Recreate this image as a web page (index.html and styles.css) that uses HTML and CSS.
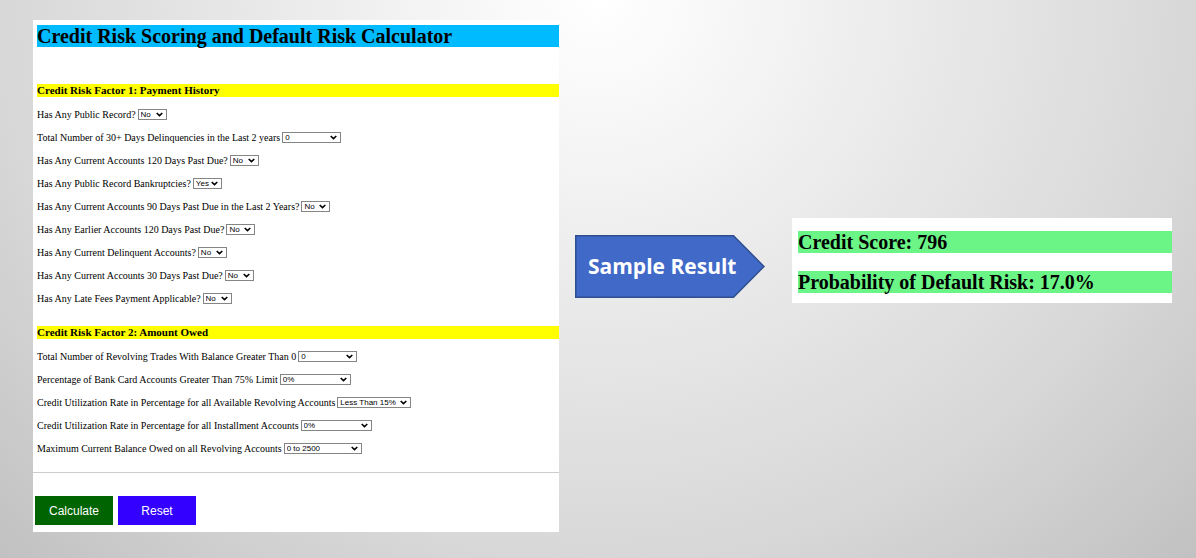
FILE: index.html
```html
<!DOCTYPE html>
<html lang="en">
<head>
<meta charset="utf-8">
<title>Credit Risk Scoring and Default Risk Calculator</title>
<link rel="stylesheet" href="styles.css">
</head>
<body>
<main class="slide">
  <form class="calculator">
    <h1 class="title">Credit Risk Scoring and Default Risk Calculator</h1>
    <section class="factor">
      <h2 class="factor-title">Credit Risk Factor 1: Payment History</h2>
      <div class="row"><label for="public-record">Has Any Public Record?</label><select id="public-record" class="pick"><option>No</option><option>Yes</option></select></div>
      <div class="row"><label for="delinq-30">Total Number of 30+ Days Delinquencies in the Last 2 years</label><select id="delinq-30" class="pick pick-count"><option>0</option><option>1</option></select></div>
      <div class="row"><label for="current-120">Has Any Current Accounts 120 Days Past Due?</label><select id="current-120" class="pick"><option>No</option><option>Yes</option></select></div>
      <div class="row"><label for="bankrupt">Has Any Public Record Bankruptcies?</label><select id="bankrupt" class="pick"><option>Yes</option><option>No</option></select></div>
      <div class="row"><label for="current-90">Has Any Current Accounts 90 Days Past Due in the Last 2 Years?</label><select id="current-90" class="pick"><option>No</option><option>Yes</option></select></div>
      <div class="row"><label for="earlier-120">Has Any Earlier Accounts 120 Days Past Due?</label><select id="earlier-120" class="pick"><option>No</option><option>Yes</option></select></div>
      <div class="row"><label for="delinquent">Has Any Current Delinquent Accounts?</label><select id="delinquent" class="pick"><option>No</option><option>Yes</option></select></div>
      <div class="row"><label for="current-30">Has Any Current Accounts 30 Days Past Due?</label><select id="current-30" class="pick"><option>No</option><option>Yes</option></select></div>
      <div class="row"><label for="late-fees">Has Any Late Fees Payment Applicable?</label><select id="late-fees" class="pick"><option>No</option><option>Yes</option></select></div>
    </section>
    <section class="factor">
      <h2 class="factor-title">Credit Risk Factor 2: Amount Owed</h2>
      <div class="row"><label for="trades">Total Number of Revolving Trades With Balance Greater Than 0</label><select id="trades" class="pick pick-count"><option>0</option><option>1</option></select></div>
      <div class="row"><label for="bank-card">Percentage of Bank Card Accounts Greater Than 75% Limit</label><select id="bank-card" class="pick pick-percent"><option>0%</option></select></div>
      <div class="row"><label for="revolving">Credit Utilization Rate in Percentage for all Available Revolving Accounts</label><select id="revolving" class="pick pick-range"><option>Less Than 15%</option></select></div>
      <div class="row"><label for="installment">Credit Utilization Rate in Percentage for all Installment Accounts</label><select id="installment" class="pick pick-percent"><option>0%</option></select></div>
      <div class="row"><label for="max-balance">Maximum Current Balance Owed on all Revolving Accounts</label><select id="max-balance" class="pick pick-amount"><option>0 to 2500</option></select></div>
    </section>
    <div class="actions">
      <button type="button" class="btn btn-calculate">Calculate</button>
      <button type="reset" class="btn btn-reset">Reset</button>
    </div>
  </form>
  <div class="arrow">
    <svg class="arrow-shape" viewBox="0 0 190 63" preserveAspectRatio="none" aria-hidden="true"><path d="M.75.75H158.500L189 31.500 158.500 62.250H.75Z" fill="#4169c8" stroke="#2f4f8f" stroke-width="1.500"/></svg>
    <span class="arrow-label">Sample Result</span>
  </div>
  <section class="result">
    <h2 class="result-line">Credit Score: 796</h2>
    <h2 class="result-line">Probability of Default Risk: 17.0%</h2>
  </section>
</main>
</body>
</html>
```
FILE: styles.css
```css
* {
  box-sizing: border-box;
}

body {
  margin: 0;
  color: #000;
  font-family: "Liberation Serif", "Times New Roman", serif;
}

.slide {
  display: grid;
  grid-template-columns: 526fr 206px 407fr;
  align-items: center;
  min-height: 100vh;
  padding: 20px 24px 26px 33px;
  background: radial-gradient(ellipse farthest-corner at 50% 0, #fff 0%, #f6f6f6 17%, #ebebeb 36%, #d8d8d8 70%, #c1c1c1 100%);
}

.calculator {
  padding: 5px 0 7px;
  background: #fff;
}

.title {
  margin: 0 0 37px 4px;
  background: #00bbff;
  font-size: 20px;
  line-height: 22px;
  white-space: nowrap;
}

.factor {
  margin-bottom: 16px;
  padding-left: 4px;
}

.factor-title {
  margin: 0 0 6px;
  background: #ff0;
  font-size: 11px;
  line-height: 13px;
}

.factor + .factor {
  margin-bottom: 12px;
}

.row {
  display: flex;
  align-items: center;
  gap: 2px;
  height: 23px;
  font-size: 10px;
}

.pick {
  appearance: none;
  width: 29px;
  height: 11px;
  padding: 0 0 0 2px;
  border: 1px solid #858585;
  border-radius: 0;
  background: #fff url("data:image/svg+xml,%3Csvg xmlns='http://www.w3.org/2000/svg' viewBox='0 0 7 5'%3E%3Cpath d='M.7 1 3.500 3.600 6.300 1' fill='none' stroke='%23000' stroke-width='1.600'/%3E%3C/svg%3E") no-repeat right 3px center / 7px 5px;
  color: #000;
  font: 8px/9px "Liberation Sans", Arial, sans-serif;
}

.pick-count {
  width: 59px;
}

.pick-percent {
  width: 71px;
}

.pick-range {
  width: 74px;
}

.pick-amount {
  width: 78px;
}

.actions {
  display: flex;
  gap: 5px;
  padding: 23px 2px 0;
  border-top: 1px solid #ccc;
}

.btn {
  width: 78px;
  height: 29px;
  padding: 0;
  border: 0;
  color: #fff;
  font: 12px "Liberation Sans", Arial, sans-serif;
}

.btn-calculate {
  background: #006400;
}

.btn-reset {
  background: #30f;
}

.arrow {
  display: grid;
  align-items: center;
  margin: 0 0 20px 16px;
}

.arrow-shape,
.arrow-label {
  grid-area: 1 / 1;
}

.arrow-shape {
  width: 100%;
  height: 63px;
}

.arrow-label {
  z-index: 1;
  padding-left: 13px;
  color: #fff;
  font: bold 21px "Open Sans", sans-serif;
  white-space: nowrap;
}

.result {
  display: grid;
  gap: 18px;
  margin: 0 0 31px 27px;
  padding: 13px 0 10px 6px;
  background: #fff;
}

.result-line {
  margin: 0;
  background: #6bf587;
  font-size: 20px;
  line-height: 22px;
}
```
